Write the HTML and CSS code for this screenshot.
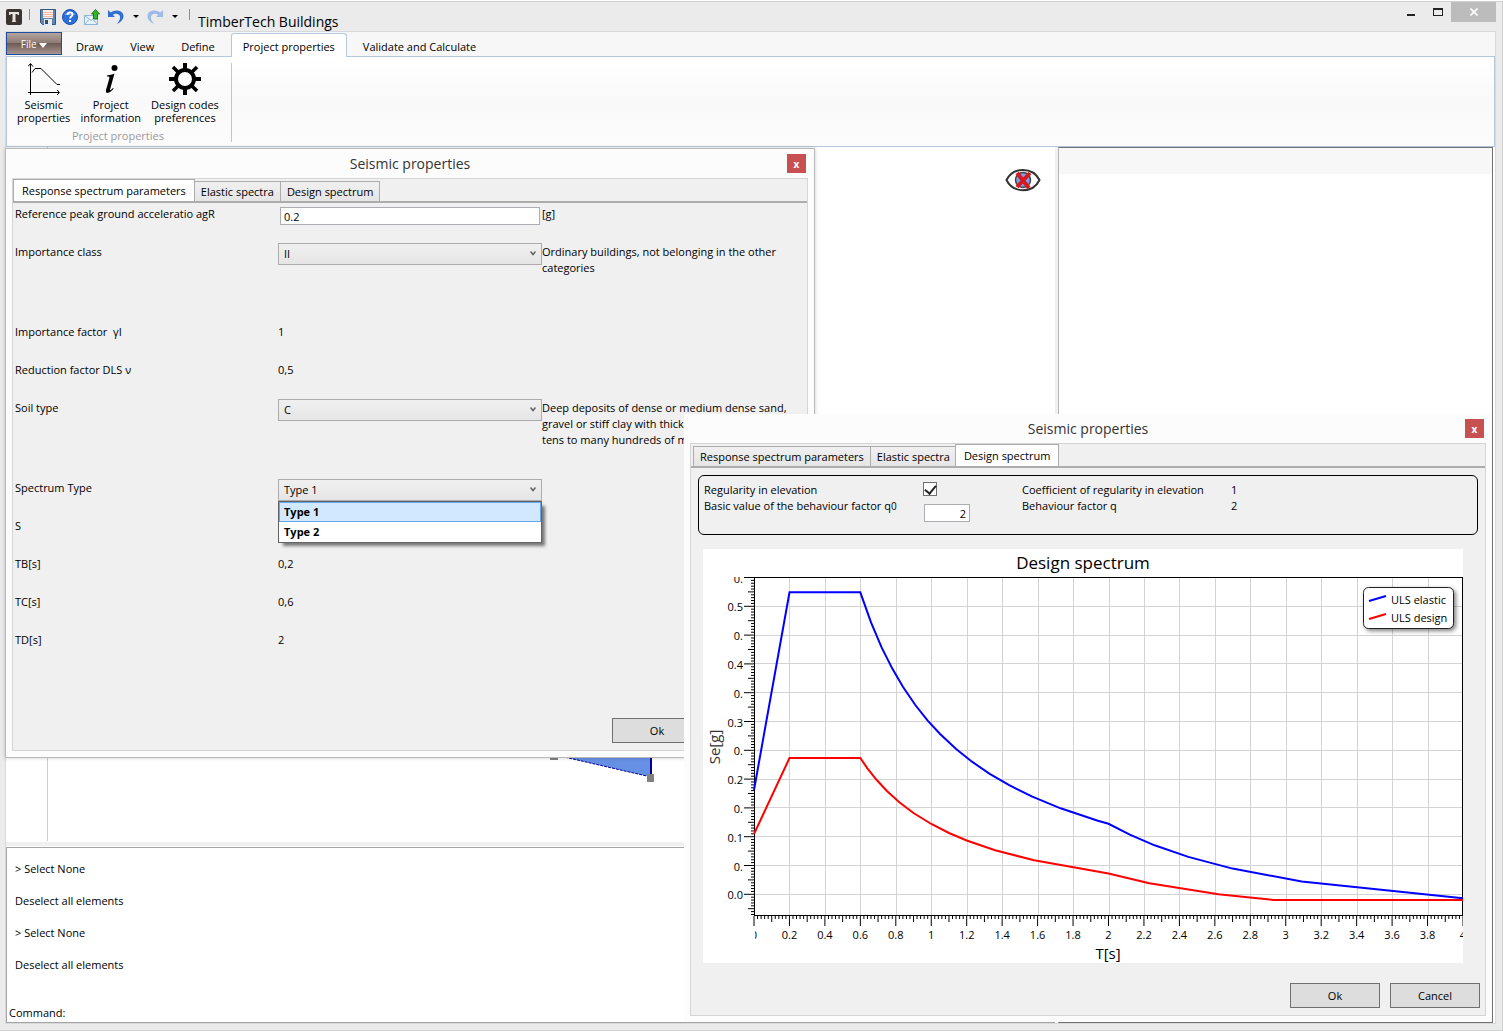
FILE: index.html
```
<!DOCTYPE html>
<html lang="en">
<head>
    <meta charset="UTF-8">
    <meta name="viewport" content="width=device-width, initial-scale=1.0">
    <title>TimberTech Buildings</title>
    <link rel="stylesheet" href="styles.css">
</head>
<body>

<div class="app">
    <header class="titlebar">
        <div class="quick-access">
            <svg class="icon" viewBox="0 0 16 16"><rect width="16" height="16" rx="2" fill="#3b3430"/><path d="M3 3h10v3h-1l-1-1H9.500v7l1 1h-5l1-1V5H5L4 6H3z" fill="#e8e4e0"/></svg>
            <span class="divider"></span>
            <button class="tool" aria-label="Save">
                <svg class="icon" viewBox="0 0 16 16"><path d="M.5.500h15v15h-13l-2-2z" fill="#5d86b4" stroke="#34567f"/><rect x="3" y="1" width="10" height="8" fill="#fdeee8"/><path d="M3 3.500h10M3 5.500h10M3 7.500h10" stroke="#eeb9a5"/><rect x="4" y="10" width="8" height="6" fill="#e6ebf0"/><rect x="5" y="11" width="3" height="4" fill="#2f4b70"/></svg>
            </button>
            <button class="tool" aria-label="Help">
                <svg class="icon" viewBox="0 0 16 16"><circle cx="8" cy="8" r="7.500" fill="#2b6fdb" stroke="#1c50a8"/><path d="M2.500 6a6 5 0 0 1 11 0z" fill="#6ea3f0"/><path d="M5.500 6c0-3.500 5-3.500 5-.5 0 2-2.500 2-2.500 4" fill="none" stroke="#fff" stroke-width="1.800"/><rect x="7" y="11" width="2" height="2" fill="#fff"/></svg>
            </button>
            <button class="tool" aria-label="Send">
                <svg class="icon" viewBox="0 0 16 16"><path d="M.5 6.500h13v9H.5z" fill="#e6f2fb" stroke="#8fb6d6"/><path d="M.5 6.500l6.500 5 6.500-5M.5 15.500l4.500-5M13.500 15.500l-4.500-5" fill="none" stroke="#8fb6d6"/><path d="M11.500.5l4 4.500h-2v5h-4V5h-2z" fill="#35b52a" stroke="#1c7a17"/></svg>
            </button>
            <button class="tool undo" aria-label="Undo">
                <svg class="icon" viewBox="0 0 16 16"><path d="M0 1v7h7L4.800 5.800C8 3.500 13 5 12 9.500c-.4 2-1.500 3.500-3 5.500 4-2 6.500-4.500 6.500-8C15.500 1.500 7.500-.5 2.600 3.600z" fill="#2f6fd0"/></svg>
            </button>
            <span class="caret"></span>
            <button class="tool redo" aria-label="Redo">
                <svg class="icon" viewBox="0 0 16 16"><path d="M16 1v7H9l2.200-2.200C8 3.500 3 5 4 9.500c.4 2 1.500 3.500 3 5.500C3 13 .5 10.500.5 7 .5 1.500 8.500-.5 13.400 3.600z" fill="#9dbbe6"/></svg>
            </button>
            <span class="caret"></span>
            <span class="divider last"></span>
        </div>
        <h1 class="app-title">TimberTech Buildings</h1>
        <div class="window-buttons">
            <button class="minimize" aria-label="Minimize"></button>
            <button class="maximize" aria-label="Maximize"></button>
            <button class="close" aria-label="Close"><svg viewBox="0 0 8 8" width="8" height="8"><path d="M.5.500l7 7M7.500.500l-7 7" stroke="#fff" stroke-width="1.600"/></svg></button>
        </div>
    </header>

    <div class="client">
        <nav class="ribbon-tabs">
            <button class="file-button">File <span class="file-arrow"></span></button>
            <button class="ribbon-tab">Draw</button>
            <button class="ribbon-tab">View</button>
            <button class="ribbon-tab">Define</button>
            <button class="ribbon-tab active">Project properties</button>
            <button class="ribbon-tab">Validate and Calculate</button>
        </nav>

        <div class="ribbon">
            <div class="ribbon-group">
                <div class="ribbon-items">
                    <button class="ribbon-button">
                        <svg viewBox="0 0 32 32" width="32" height="32" fill="none" stroke="#000"><path d="M2.500 32V1M0 3.500L2.500.5 5 3.500M0 29.500h31M29 27l2.500 2.500L29 32M4 9.500l3-4h6l16 16h3"/></svg>
                        <span>Seismic<br>properties</span>
                    </button>
                    <button class="ribbon-button">
                        <svg viewBox="0 0 32 32" width="32" height="32"><circle cx="19.500" cy="5" r="3"/><path d="M12 12.500c3-.5 5-1 7.500-2l-4.500 16c-.3 1.300.3 1.300 3-1.500l.7.600C15.500 30 10 32 11 27l3.300-11.500c.4-1.700 0-2-2.300-2z"/></svg>
                        <span>Project<br>information</span>
                    </button>
                    <button class="ribbon-button">
                        <svg viewBox="0 0 32 32" width="32" height="32"><path d="M16 0v6M16 26v6M0 16h6M26 16h6" stroke="#000" stroke-width="4"/><path d="M4 4l5 5M23 23l5 5M4 28l5-5M23 9l5-5" stroke="#000" stroke-width="3.500"/><circle cx="16" cy="16" r="9" fill="none" stroke="#000" stroke-width="4"/></svg>
                        <span>Design codes<br>preferences</span>
                    </button>
                </div>
                <div class="group-label">Project properties</div>
            </div>
        </div>

        <div class="workspace">
            <div class="left-area">
                <div class="viewport">
                    <svg class="model" width="700" height="694">
                        <path d="M41.500 0v694" stroke="#add8e6"/>
                        <path d="M450 585h195v45z" fill="#6590e4"/>
                        <path d="M450 585l195 45" stroke="#00008b" stroke-dasharray="3 1"/>
                        <path d="M645 500v130" stroke="#00008b" stroke-width="2"/>
                        <path d="M544 606h8v7h-8zM641 627h7v8h-7z" fill="#808080"/>
                    </svg>
                    <button class="visibility" aria-label="Hide elements">
                        <svg viewBox="0 0 36 24" width="36" height="24"><path d="M1.500 12C8-1.500 28-1.500 34.500 12 28 25.500 8 25.500 1.500 12z" fill="#fff" stroke="#333" stroke-width="2"/><circle cx="18" cy="12" r="7.500" fill="#7d9fe8" stroke="#444" stroke-width="1.500"/><path d="M12 5l12 15M25 5L12 19" stroke="#d8191f" stroke-width="4"/></svg>
                    </button>
                </div>
                <div class="console">
                    <p>&gt; Select None</p>
                    <p>Deselect all elements</p>
                    <p>&gt; Select None</p>
                    <p>Deselect all elements</p>
                    <div class="command-line">
                        <label for="command">Command:</label>
                        <input id="command" type="text">
                    </div>
                </div>
            </div>
            <aside class="side-panel">
                <div class="side-header"></div>
            </aside>
        </div>
    </div>
</div>

<section class="dialog dialog-parameters">
    <div class="dialog-title">
        <h2>Seismic properties</h2>
        <button class="dialog-close" aria-label="Close">x</button>
    </div>
    <div class="dialog-body">
        <div class="tabs">
            <button class="tab active">Response spectrum parameters</button>
            <button class="tab">Elastic spectra</button>
            <button class="tab">Design spectrum</button>
        </div>
        <div class="form">
            <div class="row">
                <label for="agr">Reference peak ground acceleratio agR</label>
                <input id="agr" class="text-field" type="text" value="0.2">
                <span>[g]</span>
            </div>
            <div class="row tall">
                <label for="importance">Importance class</label>
                <div class="combo">
                    <select id="importance"><option>II</option></select>
                    <svg class="chevron" viewBox="0 0 6 6"><path d="M.5 1.500L3 4.500l2.500-3"/></svg>
                </div>
                <span class="description">Ordinary buildings, not belonging in the other categories</span>
            </div>
            <div class="row">
                <span>Importance factor&nbsp; γI</span>
                <span>1</span>
            </div>
            <div class="row">
                <span>Reduction factor DLS ν</span>
                <span>0,5</span>
            </div>
            <div class="row tall">
                <label for="soil">Soil type</label>
                <div class="combo">
                    <select id="soil"><option>C</option></select>
                    <svg class="chevron" viewBox="0 0 6 6"><path d="M.5 1.500L3 4.500l2.500-3"/></svg>
                </div>
                <span class="description">Deep deposits of dense or medium dense sand, gravel or stiff clay with thickness from several tens to many hundreds of metres</span>
            </div>
            <div class="row">
                <label for="spectrum">Spectrum Type</label>
                <div class="combo">
                    <select id="spectrum"><option>Type 1</option></select>
                    <svg class="chevron" viewBox="0 0 6 6"><path d="M.5 1.500L3 4.500l2.500-3"/></svg>
                    <ul class="combo-list" role="listbox">
                        <li class="selected" role="option">Type 1</li>
                        <li role="option">Type 2</li>
                    </ul>
                </div>
            </div>
            <div class="row">
                <span>S</span>
            </div>
            <div class="row">
                <span>TB[s]</span>
                <span>0,2</span>
            </div>
            <div class="row">
                <span>TC[s]</span>
                <span>0,6</span>
            </div>
            <div class="row">
                <span>TD[s]</span>
                <span>2</span>
            </div>
        </div>
        <div class="dialog-footer">
            <button class="push">Ok</button>
            <button class="push">Cancel</button>
        </div>
    </div>
</section>

<section class="dialog dialog-spectrum">
    <div class="dialog-title">
        <h2>Seismic properties</h2>
        <button class="dialog-close" aria-label="Close">x</button>
    </div>
    <div class="dialog-body">
        <div class="tabs">
            <button class="tab">Response spectrum parameters</button>
            <button class="tab">Elastic spectra</button>
            <button class="tab active">Design spectrum</button>
        </div>
        <div class="factors">
            <label for="regularity">Regularity in elevation</label>
            <input id="regularity" type="checkbox" checked>
            <span>Coefficient of regularity in elevation</span>
            <span>1</span>
            <label for="q0">Basic value of the behaviour factor q<small>0</small></label>
            <input id="q0" class="text-field" type="text" value="2">
            <span>Behaviour factor q</span>
            <span>2</span>
        </div>
        <svg class="chart" viewBox="0 0 760 414">
            <defs>
                <clipPath id="xClip"><rect x="52" y="366" width="708" height="30"/></clipPath>
                <clipPath id="yClip"><rect x="0" y="28" width="60" height="340"/></clipPath>
            </defs>
            <text class="chart-title" x="380" y="20">Design spectrum</text>
            <g id="grid"></g>
            <rect class="plot-frame" x="51.500" y="28.500" width="708" height="338"/>
            <g id="ticks"></g>
            <g id="xLabels" clip-path="url(#xClip)"></g>
            <g id="yLabels" clip-path="url(#yClip)"></g>
            <polyline id="elastic" class="curve elastic"/>
            <polyline id="design" class="curve design"/>
            <text class="axis-title" x="405" y="410">T[s]</text>
            <text class="axis-title side" transform="translate(17 198) rotate(-90)">Se[g]</text>
            <g class="legend">
                <rect x="660.500" y="38.500" width="90" height="41" rx="5"/>
                <path class="curve elastic" d="M666 52l17-5"/>
                <path class="curve design" d="M666 70l17-5"/>
                <text x="688" y="55">ULS elastic</text>
                <text x="688" y="73">ULS design</text>
            </g>
        </svg>
        <div class="dialog-footer">
            <button class="push">Ok</button>
            <button class="push">Cancel</button>
        </div>
    </div>
</section>

<script>
    const LEFT = 51;
    const TOP = 28;
    const BOTTOM = 367;
    const ZERO = 374;
    const UNIT = 177.25;
    const STEP_Y = 28.8;

    function line(parent, x1, y1, x2, y2) {
        const el = document.createElementNS('http://www.w3.org/2000/svg', 'line');
        el.setAttribute('x1', x1);
        el.setAttribute('y1', y1);
        el.setAttribute('x2', x2);
        el.setAttribute('y2', y2);
        document.getElementById(parent).appendChild(el);
    }

    function label(parent, x, y, value) {
        const el = document.createElementNS('http://www.w3.org/2000/svg', 'text');
        el.setAttribute('x', x);
        el.setAttribute('y', y);
        el.textContent = value;
        document.getElementById(parent).appendChild(el);
    }

    function tickLength(i) {
        if (i % 10 === 0) return 10;
        return i % 5 === 0 ? 6 : 3;
    }

    // x axis, one label every 0.2 s
    for (let i = 0; i <= 200; i++) {
        const x = LEFT + i * UNIT / 50;
        line('ticks', x, BOTTOM, x, BOTTOM + tickLength(i));
        if (i % 10 === 0) {
            if (i > 0 && i < 200) line('grid', Math.round(x) + 0.5, TOP, Math.round(x) + 0.5, BOTTOM);
            label('xLabels', x, 390, String(i / 50));
        }
    }

    // y axis, the labels are cut to the width of the axis
    const yLabels = ['0.', '0.5', '0.', '0.4', '0.', '0.3', '0.', '0.2', '0.', '0.1', '0.', '0.0'];
    for (let i = 0; i <= 117; i++) {
        const y = TOP + 0.5 + i * STEP_Y / 10;
        if (y > BOTTOM) break;
        line('ticks', LEFT - tickLength(i), y, LEFT, y);
        if (i % 10 === 0) {
            if (i > 0) line('grid', LEFT, Math.floor(y) + 0.5, 760, Math.floor(y) + 0.5);
            label('yLabels', 40, y + 5, yLabels[i / 10]);
        }
    }

    // 1/T branch up to TD = 2 s, then 1/T^2
    function drawCurve(id, start, a, limit, periods) {
        const plateau = ZERO - a / 0.6;
        const points = [[0, start], [0.2, plateau], [0.6, plateau]];
        periods.forEach(t => {
            const drop = t <= 2 ? a / t : 2 * a / (t * t);
            points.push([t, Math.min(ZERO - drop, limit)]);
        });
        document.getElementById(id).setAttribute('points',
            points.map(p => (LEFT + p[0] * UNIT).toFixed(1) + ',' + p[1].toFixed(1)).join(' '));
    }

    drawCurve('elastic', 241, 198.4, 400, [0.66, 0.72, 0.78, 0.84, 0.91, 0.98, 1.05, 1.14, 1.23, 1.33, 1.44, 1.57, 1.73, 1.94, 2, 2.12, 2.26, 2.45, 2.7, 3.09, 4]);
    drawCurve('design', 285, 99, 351, [0.64, 0.69, 0.75, 0.82, 0.9, 1, 1.1, 1.2, 1.36, 1.58, 2, 2.23, 2.62, 2.93, 4]);
</script>

</body>
</html>
```
FILE: styles.css
```
* {
    box-sizing: border-box;
}
body {
    margin: 0;
    padding-top: 1px;
    position: relative;
    font-family: "Open Sans", "Noto Sans", sans-serif;
    font-size: 11px;
    line-height: 16px;
    color: #000;
    background-color: #fff;
}
button, input, select {
    font: inherit;
    color: inherit;
    margin: 0;
    padding: 0;
    border: none;
    border-radius: 0;
    background: none;
}
h1, h2, p, ul {
    margin: 0;
    padding: 0;
    font-weight: normal;
}
.app {
    height: calc(100vh - 1px);
    display: flex;
    flex-direction: column;
    border: 1px solid #cfd1d1;
    border-left: none;
    background-color: #ebebeb;
}

/* title bar */
.titlebar {
    display: flex;
    height: 29px;
    padding-right: 6px;
}
.quick-access {
    display: flex;
    align-items: center;
    gap: 6px;
    padding-left: 6px;
}
.icon {
    display: block;
    width: 16px;
    height: 16px;
}
.divider {
    width: 1px;
    height: 11px;
    margin: 0 4px 4px 1px;
    background-color: #8c8c8c;
}
.divider.last {
    margin-left: 5px;
}
.undo, .redo {
    margin-left: 2px;
}
.caret {
    margin-left: 3px;
    border: 3px solid transparent;
    border-top-color: #000;
    border-bottom: none;
}
.app-title {
    flex: 1;
    padding: 11px 0 0 4px;
    font-size: 14px;
    line-height: 18px;
}
.window-buttons {
    display: flex;
    align-items: flex-start;
}
.minimize {
    width: 8px;
    height: 2px;
    margin: 12px 18px 0 0;
    background-color: #222;
}
.maximize {
    width: 10px;
    height: 8px;
    margin: 6px 8px 0 0;
    border: 1px solid #222;
    border-top-width: 2px;
}
.close {
    display: flex;
    align-items: center;
    justify-content: center;
    width: 45px;
    height: 20px;
    background-color: #bcbcbc;
}

.client {
    flex: 1;
    display: flex;
    flex-direction: column;
    min-height: 0;
    margin: 0 6px 6px 5px;
    border: 1px solid #d9d9d9;
    background-color: #fff;
}

/* ribbon */
.ribbon-tabs {
    display: flex;
    align-items: flex-end;
    gap: 5px;
    height: 25px;
    border-bottom: 1px solid #b6c8dc;
    background-color: #f7f7f7;
}
.file-button {
    align-self: flex-start;
    width: 56px;
    height: 23px;
    margin-right: -2px;
    border: 1px solid #1d4f9e;
    font-size: 10px;
    color: #fff;
    background: linear-gradient(#b3a49f, #8f7d77 45%, #6f5b55 50%, #a8958e);
}
.file-arrow {
    display: inline-block;
    border: 4px solid transparent;
    border-top: 5px solid #fff;
    border-bottom: none;
}
.ribbon-tab {
    height: 23px;
    padding: 3px 10px 0;
    border: 1px solid transparent;
    border-bottom: none;
}
.ribbon-tab.active {
    height: 24px;
    margin-bottom: -1px;
    padding: 3px 11px 0;
    border-color: #b6c8dc;
    border-radius: 3px 3px 0 0;
    background-color: #fff;
}
.ribbon {
    display: flex;
    padding: 6px 0 4px;
    border: 1px solid #b6c8dc;
    border-top: none;
    background: linear-gradient(#fff, #f9f9f9 50%, #fcfcfc);
}
.ribbon-group {
    padding: 0 12px 0 10px;
    border-right: 1px solid #b6c8dc;
}
.ribbon-items {
    display: flex;
    gap: 10px;
}
.ribbon-button {
    display: flex;
    flex-direction: column;
    align-items: center;
    gap: 3px;
    line-height: 13px;
    text-align: center;
}
.group-label {
    padding-top: 5px;
    line-height: 13px;
    text-align: center;
    color: #9a9a9a;
}

/* workspace */
.workspace {
    flex: 1;
    display: flex;
    min-height: 0;
    padding-right: 2px;
}
.left-area {
    flex: 1;
    display: flex;
    flex-direction: column;
}
.viewport {
    position: relative;
    flex: 1;
    min-height: 0;
    overflow: hidden;
    border-right: 3px solid #f0f0f0;
    border-bottom: 4px solid #f0f0f0;
}
.model {
    display: block;
}
.visibility {
    position: absolute;
    top: 21px;
    right: 14px;
}
.console {
    margin: 1px 3px 0 0;
    border: 1px solid #a5a5a5;
    padding: 5px 2px 1px;
}
.console p {
    padding: 8px 6px;
}
.command-line {
    display: flex;
    margin-top: 24px;
}
.command-line input {
    flex: 1;
    outline: none;
}
.side-panel {
    width: 435px;
    border: 1px solid #707070;
    border-left-color: #b5b5b5;
}
.side-header {
    height: 26px;
    background-color: #f7f7f7;
}

/* dialogs */
.dialog {
    position: absolute;
    display: flex;
    flex-direction: column;
    padding: 0 6px 6px;
    background-color: #fcfcfc;
}
.dialog-parameters {
    left: 5px;
    top: 148px;
    width: 810px;
    border: 1px solid #b9b9b9;
    box-shadow: 0 0 4px rgba(0, 0, 0, 0.2);
}
.dialog-spectrum {
    left: 684px;
    top: 414px;
    width: 808px;
}
.dialog-title {
    display: flex;
    align-items: center;
    height: 29px;
    padding: 0 2px 0 21px;
}
.dialog-title h2 {
    flex: 1;
    font-size: 14px;
    text-align: center;
    color: #333;
}
.dialog-close {
    width: 19px;
    height: 19px;
    font-size: 10px;
    font-weight: bold;
    line-height: 16px;
    color: #fff;
    background-color: #c75050;
}
.dialog-body {
    display: flex;
    flex-direction: column;
    min-height: 573px;
    border: 1px solid #d5d5d5;
    background-color: #f0f0f0;
}
.tabs {
    display: flex;
    align-items: flex-end;
    height: 24px;
    padding-left: 2px;
    border-bottom: 2px solid #acacac;
}
.tab {
    height: 20px;
    padding: 0 6px;
    border: 1px solid #acacac;
    border-bottom: none;
    background: linear-gradient(#f0f0f0, #e5e5e5);
}
.tab + .tab {
    margin-left: -1px;
}
.tab.active {
    height: 22px;
    margin-left: -2px;
    padding: 0 8px;
    background: #fff;
}
.form {
    padding: 3px 2px 0;
}
.row {
    display: grid;
    grid-template-columns: 263px 264px 1fr;
    align-items: start;
    min-height: 38px;
}
.row.tall {
    min-height: 80px;
}
.description {
    padding-right: 14px;
}
.text-field {
    height: 18px;
    margin: 1px 2px 0;
    padding: 0 3px;
    border: 1px solid #abadb3;
    background-color: #fff;
}
.combo {
    position: relative;
    margin-top: -1px;
}
.combo select {
    appearance: none;
    display: block;
    width: 100%;
    height: 22px;
    padding: 0 5px;
    border: 1px solid #acacac;
    background: linear-gradient(#f0f0f0, #e5e5e5);
}
.chevron {
    position: absolute;
    top: 7px;
    right: 6px;
    width: 6px;
    height: 6px;
    fill: none;
    stroke: #606060;
    stroke-width: 1.5;
}
.combo-list {
    position: absolute;
    top: 22px;
    left: 0;
    right: 0;
    border: 1px solid #646464;
    background-color: #fff;
    box-shadow: 4px 4px 3px -1px rgba(0, 0, 0, 0.5);
    font-weight: bold;
    list-style: none;
}
.combo-list li {
    height: 20px;
    padding: 1px 4px;
    border: 1px solid transparent;
}
.combo-list .selected {
    border-color: #66a7e8;
    background-color: #d1e8ff;
}
.dialog-footer {
    display: flex;
    justify-content: flex-end;
    gap: 10px;
    margin-top: auto;
    padding: 0 5px 7px;
}
.push {
    width: 90px;
    height: 25px;
    border: 1px solid #707070;
    background-color: #ddd;
}

/* design spectrum */
.factors {
    display: grid;
    grid-template-columns: 219px 99px 209px 1fr;
    grid-template-rows: 16px 1fr;
    align-items: start;
    min-height: 60px;
    margin: 7px 7px 0;
    padding: 6px 5px;
    border: 1px solid #000;
    border-radius: 6px;
}
.factors small {
    font-size: 10px;
}
.factors input[type="checkbox"] {
    appearance: none;
    width: 14px;
    height: 14px;
    border: 1px solid #707070;
    background-color: #fff;
}
.factors input[type="checkbox"]:checked::before {
    content: "";
    display: block;
    width: 5px;
    height: 9px;
    margin: 0 0 0 3px;
    border: solid #222;
    border-width: 0 2px 2px 0;
    transform: rotate(40deg);
}
.factors .text-field {
    width: 46px;
    margin: 6px 1px 0;
    text-align: right;
}
.chart {
    display: block;
    margin: 14px 22px 0 12px;
    background-color: #fff;
}
.chart text {
    font-size: 11px;
}
.chart .chart-title {
    font-size: 17px;
    text-anchor: middle;
}
.chart .axis-title {
    font-size: 15px;
    text-anchor: middle;
}
.chart .side {
    fill: #333;
}
.plot-frame {
    fill: none;
    stroke: #000;
}
#grid line {
    stroke: #d3d3d3;
}
#ticks line {
    stroke: #000;
}
#xLabels text {
    text-anchor: middle;
}
#yLabels text {
    text-anchor: end;
}
.curve {
    fill: none;
    stroke-width: 2;
}
.elastic {
    stroke: #00f;
}
.design {
    stroke: #f00;
}
.legend rect {
    fill: #fff;
    stroke: #222;
    filter: drop-shadow(2px 2px 2px rgba(0, 0, 0, 0.5));
}
```
